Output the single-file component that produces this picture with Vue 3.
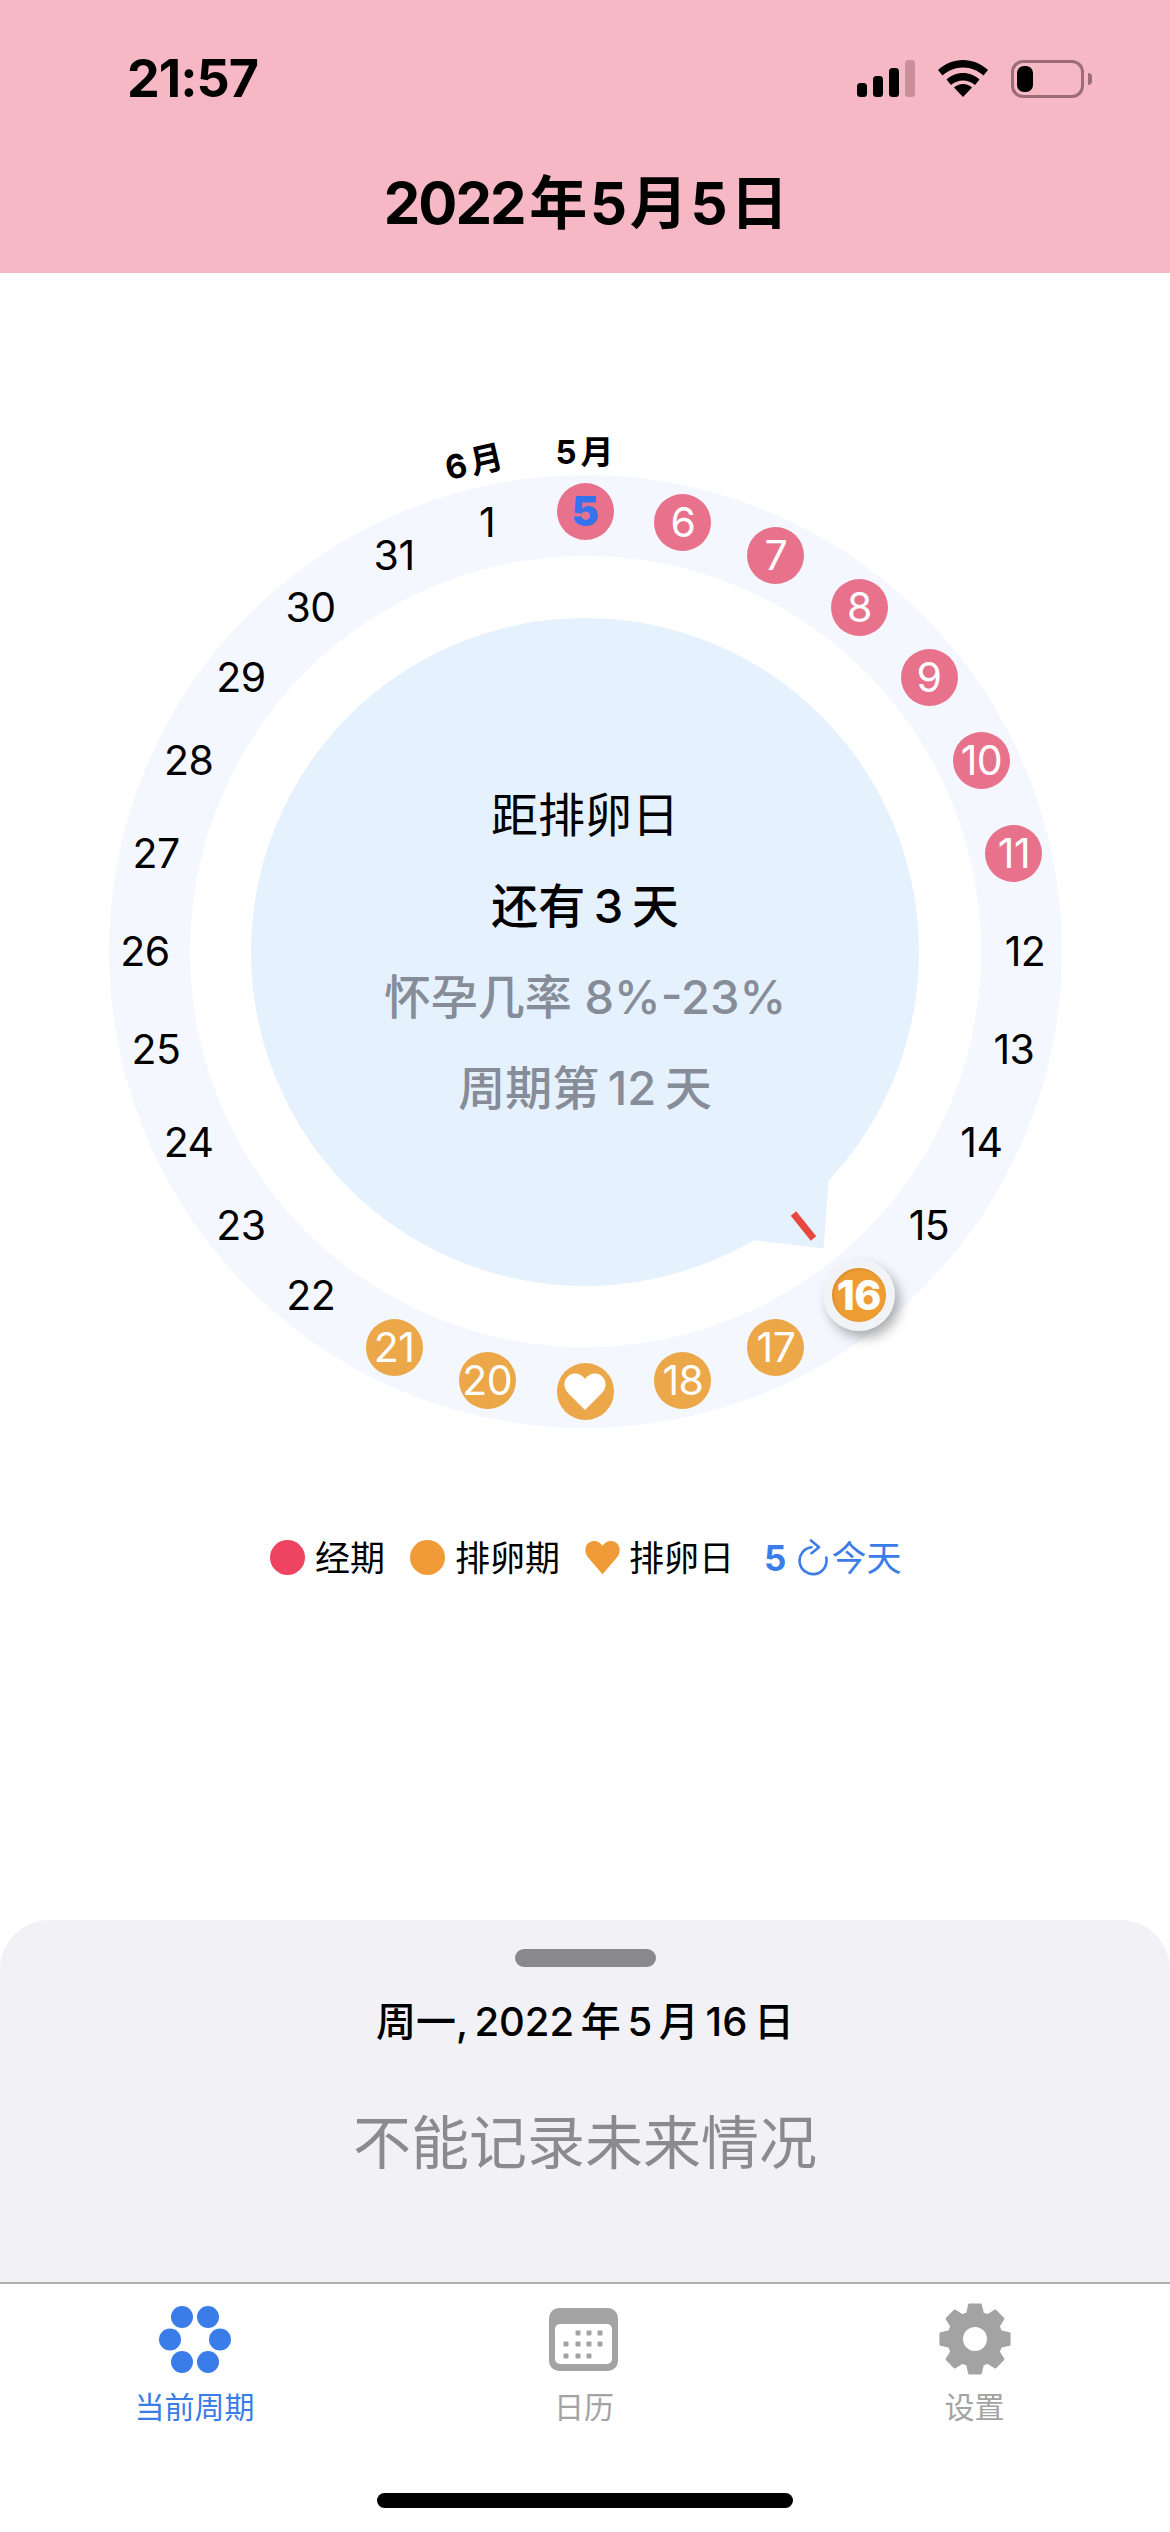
<script setup>
import { computed } from 'vue'

const labels = [5,6,7,8,9,10,11,12,13,14,15,16,17,18,19,20,21,22,23,24,25,26,27,28,29,30,31,1]
const R = 440
const C = 476.5

const days = computed(() =>
  labels.map((n, i) => {
    const a = (i * 2 * Math.PI) / labels.length
    let kind = 'plain'
    if (i === 0) kind = 'today'
    else if (n >= 6 && n <= 11 && i < 27) kind = 'period'
    else if (n === 16) kind = 'selected'
    else if (n === 19) kind = 'heart'
    else if (n === 17 || n === 18 || n === 20 || n === 21) kind = 'fertile'
    return {
      n,
      kind,
      style: {
        left: `${C + R * Math.sin(a)}px`,
        top: `${C - R * Math.cos(a)}px`
      }
    }
  })
)

const gearPath = computed(() => {
  const teeth = 8
  const cx = 36, cy = 36
  const out = 34.5, inn = 26.5
  const step = (2 * Math.PI) / teeth
  const pts = []
  for (let i = 0; i < teeth; i++) {
    const a = i * step - Math.PI / 2
    const seq = [
      [inn, a - step * 0.36],
      [out, a - step * 0.2],
      [out, a + step * 0.2],
      [inn, a + step * 0.36]
    ]
    for (const [r, t] of seq) {
      pts.push(`${(cx + r * Math.cos(t)).toFixed(2)} ${(cy + r * Math.sin(t)).toFixed(2)}`)
    }
  }
  return `M${pts.join('L')}Z`
})

const calDots = [
  [17, 25, false], [29, 25, true], [40, 25, true], [51, 25, true],
  [17, 36, true], [29, 36, true], [40, 36, true], [51, 36, true],
  [17, 48, true], [29, 48, true], [40, 48, true], [51, 48, false]
].filter((d) => d[2])
</script>

<template>
  <div class="screen">
    <header class="head">
      <div class="status">
        <span class="time">21:57</span>
        <div class="status-icons">
          <svg class="signal" width="58" height="37" viewBox="0 0 58 37">
            <rect x="0" y="23" width="10" height="14" rx="3.500" />
            <rect x="16" y="16" width="10" height="21" rx="3.500" />
            <rect x="32" y="8" width="10" height="29" rx="3.500" />
            <rect x="48" y="0" width="10" height="37" rx="3.500" fill="#c98f9b" />
          </svg>
          <svg class="wifi" width="50" height="37" viewBox="0 0 50 37">
            <path d="M25 0C34 0 43 3.500 50 10L45.500 15.500C40 10.500 33 7.500 25 7.500S10 10.500 4.500 15.500L0 10C7 3.500 16 0 25 0Z" />
            <path d="M25 13C31.500 13 37 15.500 41.500 19.500L37 25C33.500 22 29.500 20.500 25 20.500S16.500 22 13 25L8.500 19.500C13 15.500 18.500 13 25 13Z" />
            <path d="M25 37L16 27.500C18.500 25.500 21.500 24 25 24S31.500 25.500 34 27.500Z" />
          </svg>
          <div class="battery"><span class="level"></span><span class="nub"></span></div>
        </div>
      </div>
      <h1 class="title">2022 年 5 月 5 日</h1>
    </header>

    <main class="main">
      <div class="dial">
        <div class="track"></div>
        <div class="bubble">
          <p class="l1">距排卵日</p>
          <p class="l2">还有 3 天</p>
          <p class="l3">怀孕几率 8%-23%</p>
          <p class="l4">周期第 12 天</p>
        </div>
        <svg class="tail" width="953" height="953" viewBox="108.500 474.500 953 953">
          <polygon points="755,1240 823,1248 828,1180 700,1170" fill="#e6f1fe" />
          <line x1="793" y1="1213" x2="813" y2="1238" stroke="#e8483f" stroke-width="7" />
        </svg>
        <span class="month m5">5 月</span>
        <span class="month m6">6 月</span>
        <div v-for="d in days" :key="d.n" class="day" :class="d.kind" :style="d.style">
          <svg v-if="d.kind === 'heart'" width="42" height="38" viewBox="0 0 42 38">
            <path d="M21 37 4.500 20.500C-1.500 14.500-.5 6 5 2.500 10.500-1 17 .5 21 6c4-5.500 10.500-7 16-3.500s6.500 12 .5 18Z" fill="#fff" />
          </svg>
          <span v-else>{{ d.n }}</span>
        </div>
      </div>

      <div class="legend">
        <span class="item"><i class="dot red"></i>经期</span>
        <span class="item"><i class="dot orange"></i>排卵期</span>
        <span class="item">
          <svg width="35" height="35" viewBox="0 0 42 42" class="lheart">
            <path d="M21 41 4.500 22C-1.500 15-.5 6.500 5 3c5.500-3.500 12-2 16 4 4-6 10.500-7.500 16-4s6.500 12 .5 19Z" fill="#f19a38" />
          </svg>排卵日
        </span>
        <span class="today-link">
          <b>5</b>
          <svg width="30" height="37" viewBox="0 0 30 37" fill="none" stroke="#3a7de8" stroke-width="2.600" stroke-linecap="round" stroke-linejoin="round">
            <path d="M13.500 8.200A13.500 13.500 0 1 0 28.200 18.500" />
            <path d="M13 1.500l8 6.700-7.500 6" />
          </svg>
          <span>今天</span>
        </span>
      </div>
    </main>

    <section class="sheet">
      <div class="handle"></div>
      <div class="sheet-date">周一, 2022 年 5 月 16 日</div>
      <div class="sheet-msg">不能记录未来情况</div>
    </section>

    <nav class="tabs">
      <div class="tab active">
        <svg width="72" height="68" viewBox="0 0 72 68" fill="#3a7de8">
          <circle cx="23" cy="11" r="11" /><circle cx="49" cy="11" r="11" />
          <circle cx="11" cy="33.500" r="11" /><circle cx="61" cy="33.500" r="11" />
          <circle cx="23" cy="56" r="11" /><circle cx="49" cy="56" r="11" />
        </svg>
        <span>当前周期</span>
      </div>
      <div class="tab">
        <svg width="70" height="68" viewBox="0 -2 70 68">
          <rect x="0" y="0" width="69" height="63" rx="10" fill="#a3a3a3" />
          <rect x="6" y="16" width="57" height="40" rx="5" fill="#fff" />
          <rect v-for="(d, i) in calDots" :key="i" :x="d[0] - 2.5" :y="d[1] - 2.5" width="5" height="5" rx="1" fill="#a3a3a3" />
        </svg>
        <span>日历</span>
      </div>
      <div class="tab">
        <svg class="gear" width="72" height="68" viewBox="0 3 72 68">
          <path :d="gearPath" fill="#a3a3a3" stroke="#a3a3a3" stroke-width="3" stroke-linejoin="round" />
          <circle cx="36" cy="36" r="12" fill="#fff" />
        </svg>
        <span>设置</span>
      </div>
      <div class="home"></div>
    </nav>
  </div>
</template>

<style>
html, body { margin: 0; background: #fff; }
</style>

<style scoped>
.screen {
  width: 1170px;
  height: 2532px;
  display: flex;
  flex-direction: column;
  overflow: hidden;
  font-family: Inter, "Noto Sans CJK SC", sans-serif;
  color: #000;
  background: #fff;
}
p, h1 { margin: 0; }

.head { height: 273px; background: #f5b8c4; flex: none; padding-top: 56px; box-sizing: border-box; }
.status { display: flex; justify-content: space-between; align-items: center; height: 45px; padding: 0 79px 0 127px; }
.time { font-size: 52px; font-weight: 700; line-height: 45px; letter-spacing: -1px; }
.status-icons { display: flex; align-items: center; gap: 23px; }
.signal, .wifi { display: block; fill: #000; }
.battery { position: relative; width: 73px; height: 38px; box-sizing: border-box; border: 3px solid #9c6d78; border-radius: 12px; margin-right: 7px; }
.level { position: absolute; left: 3px; top: 3px; width: 16px; height: 26px; border-radius: 7px; background: #000; }
.nub { position: absolute; right: -11px; top: 10px; width: 4px; height: 12px; border-radius: 0 6px 6px 0; background: #9c6d78; }
.title { margin-top: 65px; text-align: center; font-size: 58px; line-height: 74px; font-weight: 700; letter-spacing: -2px; word-spacing: -7px; }

.main { flex: 1; display: flex; flex-direction: column; align-items: center; padding-top: 202px; }
.dial { position: relative; width: 953px; height: 953px; flex: none; display: flex; align-items: center; justify-content: center; }
.track { position: absolute; inset: 0; border-radius: 50%; box-sizing: border-box; border: 81px solid #f4f8fe; }
.bubble {
  position: relative;
  width: 668px;
  height: 668px;
  border-radius: 50%;
  background: #e6f1fe;
  display: flex;
  flex-direction: column;
  align-items: center;
  padding-top: 173px;
  box-sizing: border-box;
  font-size: 47px;
  line-height: 47px;
  word-spacing: -4px;
}
.l2 { margin-top: 44px; font-weight: 500; }
.l3 { margin-top: 44px; color: #868c98; font-weight: 500; word-spacing: 0; }
.l4 { margin-top: 44px; color: #868c98; font-weight: 500; }
.tail { position: absolute; inset: 0; pointer-events: none; }

.month { position: absolute; font-size: 33px; line-height: 32px; font-weight: 700; white-space: nowrap; word-spacing: -4px; transform: translate(-50%, -50%); }
.m5 { left: 476px; top: -23px; }
.m6 { left: 365px; top: -13px; transform: translate(-50%, -50%) rotate(-13deg); }

.day {
  position: absolute;
  width: 57px;
  height: 57px;
  margin: -28.500px 0 0 -28.500px;
  border-radius: 50%;
  display: flex;
  align-items: center;
  justify-content: center;
  font-size: 41px;
  line-height: 1;
  letter-spacing: -0.5px;
  white-space: nowrap;
}
.day.period { background: #e8728c; color: #fff; }
.day.today { background: #e8728c; color: #3572ee; font-weight: 900; }
.day.fertile, .day.heart { background: #eba748; color: #fff; }
.day.selected {
  width: 54px;
  height: 54px;
  background: #ee9d35;
  color: #fff;
  font-weight: 800;
  border: 9.500px solid #f2f3f6;
  box-shadow: 5px 7px 12px rgba(0, 0, 0, 0.3), inset 1px 1px 3px rgba(120, 70, 0, 0.25);
  box-sizing: content-box;
  margin: -36.500px 0 0 -36.500px;
}

.legend { margin-top: 111px; display: flex; align-items: center; font-size: 35px; line-height: 36px; width: 630px; }
.item { display: flex; align-items: center; margin-right: 25px; white-space: nowrap; }
.dot { width: 35px; height: 35px; border-radius: 50%; margin-right: 10px; }
.red { background: #ee4462; }
.orange { background: #f19a38; }
.lheart { margin-right: 9px; }
.today-link { display: flex; align-items: center; color: #3a7de8; margin-left: 5px; white-space: nowrap; }
.today-link b { font-weight: 700; margin-right: 12px; }
.today-link svg { margin-right: 3px; }

.sheet {
  flex: none;
  height: 362px;
  box-sizing: border-box;
  background: #f1f1f6;
  border-radius: 50px 50px 0 0;
  display: flex;
  flex-direction: column;
  align-items: center;
  padding-top: 29px;
}
.handle { width: 141px; height: 18px; border-radius: 9px; background: #88888d; }
.sheet-date { margin-top: 33px; font-size: 40px; line-height: 44px; font-weight: 500; word-spacing: -4px; }
.sheet-msg { margin-top: 69px; font-size: 58px; line-height: 60px; color: #8a8a8f; }

.tabs {
  position: relative;
  flex: none;
  height: 250px;
  box-sizing: border-box;
  border-top: 2px solid #b0b0b2;
  display: grid;
  grid-template-columns: 389px 390px 391px;
  padding-top: 22px;
  background: #fff;
}
.tab { display: flex; flex-direction: column; align-items: center; color: #a3a3a3; font-size: 30px; line-height: 34px; gap: 16px; height: 120px; }
.tab.active { color: #3a7de8; }
.tab svg { display: block; }
.tab .gear { overflow: visible; }
.home { position: absolute; left: 377px; top: 209px; width: 416px; height: 15px; border-radius: 8px; background: #000; }
</style>
